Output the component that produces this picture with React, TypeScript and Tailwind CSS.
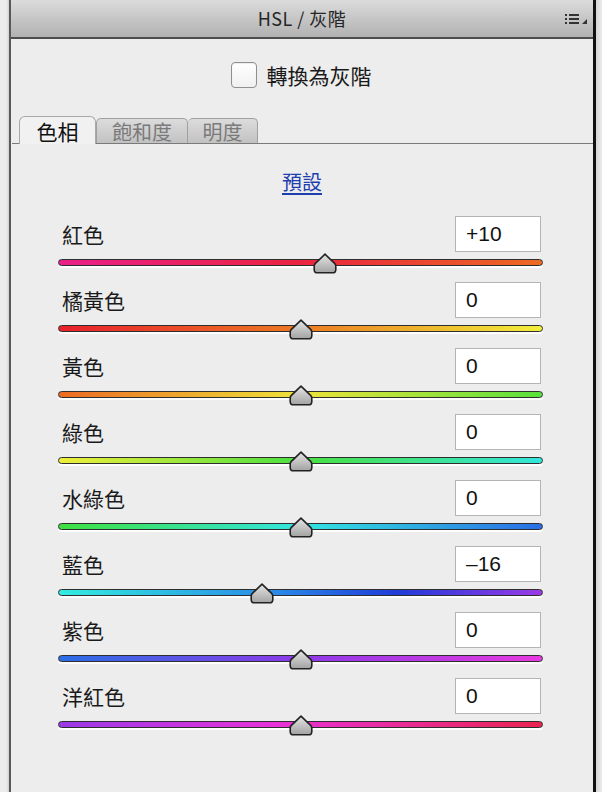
const cjk = { fontFamily: '"Noto Sans CJK TC", "Noto Sans", sans-serif' };
const latin = { fontFamily: '"Liberation Sans", "Noto Sans CJK TC", sans-serif' };

const sliders = [
  { label: "紅色", value: "+10", pos: 0.55, track: "bg-[linear-gradient(to_right,#e9208a,#ea2440_50%,#ec6a22)]" },
  { label: "橘黃色", value: "0", pos: 0.5, track: "bg-[linear-gradient(to_right,#e8202c,#ec7a22_50%,#f1ef3a)]" },
  { label: "黃色", value: "0", pos: 0.5, track: "bg-[linear-gradient(to_right,#ec6a22,#efe43a_50%,#58e03c)]" },
  { label: "綠色", value: "0", pos: 0.5, track: "bg-[linear-gradient(to_right,#efef3a,#49e040_50%,#33e6dc)]" },
  { label: "水綠色", value: "0", pos: 0.5, track: "bg-[linear-gradient(to_right,#3ee040,#33e5e0_50%,#2a6ee6)]" },
  { label: "藍色", value: "–16", pos: 0.42, track: "bg-[linear-gradient(to_right,#33ecdf,#2a8ae8_45%,#1f3bd8_70%,#9b3ae6)]" },
  { label: "紫色", value: "0", pos: 0.5, track: "bg-[linear-gradient(to_right,#2a6ee6,#8e3ae8_50%,#e63adf)]" },
  { label: "洋紅色", value: "0", pos: 0.5, track: "bg-[linear-gradient(to_right,#9a3ae8,#e832d8_45%,#ea2450)]" },
];

function Thumb() {
  return (
    <svg width="24" height="21" viewBox="0 0 24 21" className="block">
      <defs>
        <linearGradient id="thumbFill" x1="0" y1="0" x2="0" y2="1">
          <stop offset="0" stopColor="#e6e6e6" />
          <stop offset="1" stopColor="#a2a2a2" />
        </linearGradient>
      </defs>
      <path
        d="M12 1.2 L21.6 10.4 Q22.8 11.6 22.8 13.4 V16.4 Q22.8 19.8 19.4 19.8 H4.6 Q1.2 19.8 1.2 16.4 V13.4 Q1.2 11.6 2.4 10.4 Z"
        fill="url(#thumbFill)"
        stroke="#222"
        strokeWidth="1.6"
        strokeLinejoin="round"
      />
    </svg>
  );
}

function SliderRow({ label, value, pos, track }: { label: string; value: string; pos: number; track: string }) {
  return (
    <div className="h-[66px]">
      <div className="flex items-center justify-between h-[36px]">
        <span className="pl-[4px] text-[21px] leading-none text-[#1a1a1a]" style={cjk}>{label}</span>
        <div className="w-[86px] h-[36px] mr-[2px] bg-white border border-[#b4b4b4] flex items-center pl-[10px] text-[21px] text-[#111]" style={latin}>
          {value}
        </div>
      </div>
      <div className="relative mt-[7px] h-[7px]">
        <div className={`h-[7px] rounded-full border border-[#2e2e2e] shadow-[0_2px_0_rgba(255,255,255,0.95)] ${track}`} />
        <div className="absolute top-[-6px] -translate-x-1/2" style={{ left: `${pos * 100}%` }}>
          <Thumb />
        </div>
      </div>
    </div>
  );
}

export default function App() {
  return (
    <div className="w-[602px] h-[792px] bg-[#e9e9e9] flex overflow-hidden">
      <div className="w-[9px] shrink-0 bg-[linear-gradient(to_right,#ececec,#ececec_70%,#cfcfcf)]" />
      <div className="flex-1 flex flex-col border-l-2 border-[#595959] border-r-[3px] border-r-[#111] bg-[#ededed]">
        {/* header */}
        <div className="relative h-[39px] shrink-0 border-b-2 border-[#4d4d4d] bg-[linear-gradient(to_bottom,#dcdcdc,#c6c6c6_50%,#b2b2b2)] flex items-center justify-center">
          <span className="text-[18px] text-[#262626] tracking-[0.5px]" style={cjk}>HSL / 灰階</span>
          <svg width="24" height="10" viewBox="0 0 24 10" className="absolute right-[4px] top-[14px]">
            <rect x="0" y="0" width="2" height="2" fill="#333" />
            <rect x="0" y="4" width="2" height="2" fill="#333" />
            <rect x="0" y="8" width="2" height="2" fill="#333" />
            <rect x="4" y="0" width="10" height="2" fill="#333" />
            <rect x="4" y="4" width="10" height="2" fill="#333" />
            <rect x="4" y="8" width="10" height="2" fill="#333" />
            <path d="M17 10 L22 10 L22 5 Z" fill="#333" />
          </svg>
        </div>

        {/* checkbox */}
        <div className="mt-[23px] flex items-center justify-center gap-[10px] pr-[2px]">
          <div className="w-[26px] h-[26px] rounded-[4px] border border-[#8f8f8f] bg-[linear-gradient(to_bottom,#ffffff,#f0f0f0)] shadow-[inset_0_1px_1px_rgba(0,0,0,0.08)]" />
          <span className="text-[21px] text-[#1a1a1a] leading-none" style={cjk}>轉換為灰階</span>
        </div>

        {/* tabs */}
        <div className="mt-[28px] ml-[1px] flex items-end border-b border-[#7a7a7a] h-[28px]">
          <div className="w-[7px]" />
          <div className="w-[77px] h-[28px] -mb-px pt-[2px] rounded-t-[6px] border border-b-0 border-[#a8a8a8] bg-[#f1f1f1] flex items-center justify-center text-[21px] text-[#111]" style={cjk}>
            色相
          </div>
          <div className="w-[92px] h-[25px] pt-[2px] rounded-t-[5px] border border-b-0 border-[#a0a0a0] bg-[linear-gradient(to_bottom,#dcdcdc,#c2c2c2)] flex items-center justify-center text-[20px] text-[#7a7a7a]" style={cjk}>
            飽和度
          </div>
          <div className="w-[70px] h-[25px] pt-[2px] rounded-t-[5px] border border-b-0 border-l-0 border-[#a0a0a0] bg-[linear-gradient(to_bottom,#dcdcdc,#c2c2c2)] flex items-center justify-center text-[20px] text-[#7a7a7a]" style={cjk}>
            明度
          </div>
        </div>

        {/* preset link */}
        <div className="mt-[26px] flex justify-center">
          <span className="text-[20px] leading-[24px] text-[#1d3fb0] underline underline-offset-[3px]" style={cjk}>預設</span>
        </div>

        {/* sliders */}
        <div className="mt-[22px] ml-[47px] w-[485px]">
          {sliders.map((s) => (
            <SliderRow key={s.label} {...s} />
          ))}
        </div>
      </div>
      <div className="w-[6px] shrink-0 bg-[linear-gradient(to_right,#d6d6d6,#ececec)]" />
    </div>
  );
}
